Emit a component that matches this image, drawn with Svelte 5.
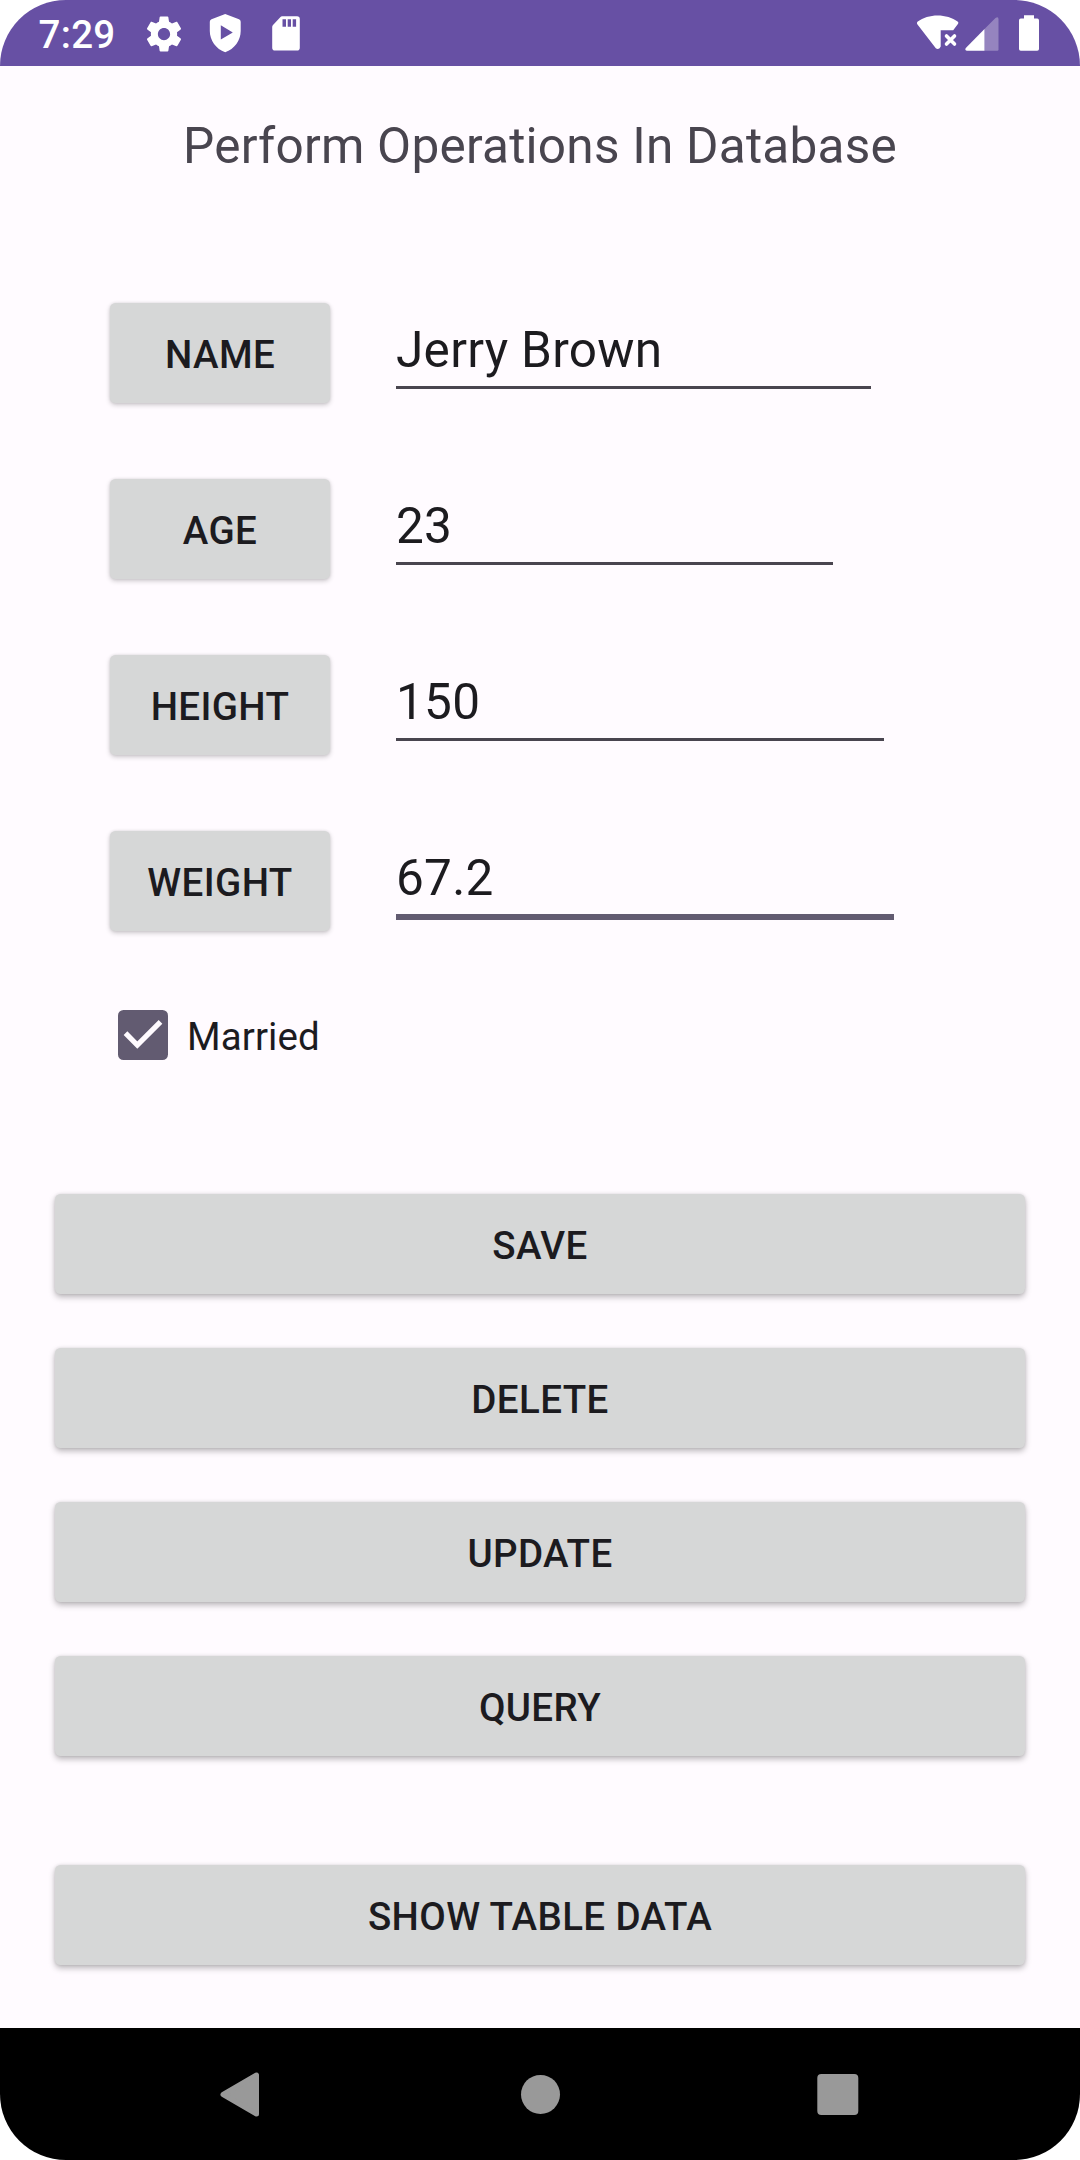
<script>
  const fields = [
    { label: 'NAME', value: 'Jerry Brown', width: 475, focused: false },
    { label: 'AGE', value: '23', width: 437, focused: false },
    { label: 'HEIGHT', value: '150', width: 488, focused: false },
    { label: 'WEIGHT', value: '67.2', width: 498, focused: true }
  ];
  const actions = ['SAVE', 'DELETE', 'UPDATE', 'QUERY'];
</script>

<div class="screen">
  <header class="status">
    <span class="time">7:29</span>
    <svg class="gear" width="42" height="42" viewBox="0 0 24 24" fill="#fff">
      <path d="M19.43 12.98c.04-.32.07-.64.07-.98s-.03-.66-.07-.98l2.11-1.65c.19-.15.24-.42.12-.64l-2-3.46c-.12-.22-.39-.3-.61-.22l-2.49 1c-.52-.4-1.08-.73-1.69-.98l-.38-2.65C14.46 2.18 14.25 2 14 2h-4c-.25 0-.46.18-.49.42l-.38 2.65c-.61.25-1.17.59-1.69.98l-2.49-1c-.23-.09-.49 0-.61.22l-2 3.46c-.13.22-.07.49.12.64l2.11 1.65c-.04.32-.07.65-.07.98s.03.66.07.98l-2.11 1.65c-.19.15-.24.42-.12.64l2 3.46c.12.22.39.3.61.22l2.49-1c.52.4 1.08.73 1.69.98l.38 2.65c.03.24.24.42.49.42h4c.25 0 .46-.18.49-.42l.38-2.65c.61-.25 1.17-.59 1.69-.98l2.49 1c.23.09.49 0 .61-.22l2-3.46c.12-.22.07-.49-.12-.64l-2.11-1.65zM12 15.5c-1.93 0-3.5-1.57-3.5-3.5s1.57-3.5 3.5-3.5 3.5 1.57 3.5 3.5-1.57 3.5-3.5 3.5z" />
    </svg>
    <svg class="shield" width="32" height="40" viewBox="209 13 32 40" fill="#fff">
      <path fill-rule="evenodd" d="M225.2 14L239 19.2Q240.700 19.900 240.700 21.700V31C240.700 40.500 234.500 49 225.200 52.300C216 49 209.800 40.500 209.800 31V21.700Q209.800 19.900 211.500 19.200ZM220.800 25.300V39.600L232.800 32.500Z" />
    </svg>
    <svg class="card" width="28" height="36" viewBox="272.500 15 28 36" fill="#fff">
      <path fill-rule="evenodd" d="M282.500 16.200H297.500Q300.300 16.200 300.300 19V47.800Q300.300 50.600 297.500 50.600H275.500Q272.700 50.600 272.700 47.800V27Q272.700 25.800 273.500 25L281 17Q281.700 16.200 282.500 16.200ZM283 19.300V26.700H286.500V19.300ZM288.200 19.300V26.700H291.500V19.300ZM293.200 19.300V26.700H296.600V19.300Z" />
    </svg>
    <span class="spacer"></span>
    <svg class="wifi" width="42" height="36" viewBox="917 14 42 36" fill="#fff">
      <path d="M937.600 15.500C945 15.500 952.500 17.700 957.600 21.500Q959 22.600 957.900 24L953.200 30.300H940.700V46.500L939.600 48.200Q937.600 49.800 935.800 48.200L917.500 24.500Q916.300 22.800 917.800 21.500C923 17.700 930 15.500 937.600 15.500Z" />
      <path d="M946.500 36L954.500 44M954.500 36L946.500 44" stroke="#fff" stroke-width="3.600" stroke-linecap="round" />
    </svg>
    <svg class="signal" width="34" height="34" viewBox="964.500 16.500 34 34" fill="#fff">
      <path opacity=".3" d="M984 28.500L995 17.600Q998 15.500 998 19V49Q998 50.200 996.800 50.200H984Z" />
      <path d="M984 28.500V50.200H966.300Q964 49.800 965.300 47.600Z" />
    </svg>
    <svg class="battery" width="20" height="36" viewBox="1019 15 20 36" fill="#fff">
      <path d="M1024 15.200H1034V18.600H1037.200Q1039 18.600 1039 20.400V49Q1039 50.800 1037.200 50.800H1020.800Q1019 50.800 1019 49V20.400Q1019 18.600 1020.800 18.600H1024Z" />
    </svg>
  </header>

  <main>
    <h1>Perform Operations In Database</h1>

    <section class="form">
      {#each fields as field}
        <div class="row">
          <button class="btn label">{field.label}</button>
          <div class="field" class:focused={field.focused} style="width: {field.width}px">{field.value}</div>
        </div>
      {/each}
    </section>

    <label class="check">
      <svg width="50" height="50" viewBox="0 0 50 50">
        <rect width="50" height="50" rx="5.500" fill="#625b71" />
        <path d="M7.500 23.200L19.300 35L42.500 11.800" fill="none" stroke="#fffbff" stroke-width="5.200" />
      </svg>
      <span>Married</span>
    </label>

    <section class="actions">
      {#each actions as action}
        <button class="btn wide">{action}</button>
      {/each}
    </section>
    <section class="more">
      <button class="btn wide">SHOW TABLE DATA</button>
    </section>
  </main>

  <nav>
    <svg width="46" height="46" viewBox="0 0 46 46"><path d="M6 23.500L39.500 4V43Z" fill="#999" stroke="#999" stroke-width="5" stroke-linejoin="round" /></svg>
    <svg width="46" height="46" viewBox="0 0 46 46"><circle cx="24.500" cy="23.400" r="19.500" fill="#999" /></svg>
    <svg width="46" height="46" viewBox="0 0 46 46"><rect x="2.300" y="3" width="41" height="41" rx="4" fill="#999" /></svg>
  </nav>
</div>

<style>
  :global(body) { background: #fff; }
  .screen {
    width: 1080px;
    height: 2160px;
    display: flex;
    flex-direction: column;
    background: #fffbff;
    border-radius: 66px;
    overflow: hidden;
    font-family: Roboto, sans-serif;
    color: #1c1b1f;
  }
  svg { display: block; flex: none; }
  .status {
    height: 66px;
    flex: none;
    box-sizing: border-box;
    padding: 0 41px 0 38.500px;
    display: flex;
    align-items: center;
    background: #6750a4;
    color: #fff;
  }
  .time { width: 104.500px; font-size: 38.500px; font-weight: 500; line-height: 46px; letter-spacing: .3px; padding-top: 3px; }
  .gear { margin-top: 1px; }
  .shield { margin-left: 23.500px; }
  .card { margin-left: 31.500px; }
  .spacer { flex: 1; }
  .wifi { margin-top: -2px; }
  .signal { margin: 1px 20.500px 0 5.500px; }
  main { flex: 1; display: flex; flex-direction: column; }
  h1 {
    margin: 50px 0 0;
    font-size: 49.500px;
    font-weight: 400;
    line-height: 60px;
    letter-spacing: .24px;
    text-align: center;
    color: #49454f;
  }
  .form { margin: 127px 0 0 110px; display: flex; flex-direction: column; gap: 76px; }
  .row { display: flex; height: 100px; }
  .btn {
    height: 100px;
    border: 0;
    border-radius: 5.500px;
    padding: 4px 0 0;
    background: #d6d7d7;
    box-shadow: 0 2px 5px rgba(0, 0, 0, .2), 0 0 3px rgba(0, 0, 0, .1);
    font: 500 38.500px/46px Roboto, sans-serif;
    letter-spacing: .38px;
    color: #1c1b1f;
  }
  .label { width: 220px; margin-right: 66px; }
  .wide { width: 970px; box-shadow: 0 3px 6px rgba(0, 0, 0, .28), 0 0 3px rgba(0, 0, 0, .1); }
  .field {
    box-sizing: border-box;
    height: 86px;
    padding-top: 17px;
    font-size: 49.500px;
    line-height: 60px;
    letter-spacing: .3px;
    border-bottom: 3px solid #49454f;
  }
  .field.focused { height: 89px; border-bottom: 6px solid #625b71; }
  .check { margin: 79px 0 0 118px; display: flex; align-items: center; gap: 19px; height: 50px; font-size: 38.500px; line-height: 46px; letter-spacing: .1px; }
  .check span { padding-top: 3px; }
  .actions { margin: 134px 0 0 55px; display: flex; flex-direction: column; gap: 54px; }
  .more { margin: 109px 0 0 55px; }
  nav {
    height: 132px;
    flex: none;
    display: flex;
    align-items: center;
    justify-content: space-between;
    padding: 0 219px 0 217px;
    background: #000;
  }
</style>
